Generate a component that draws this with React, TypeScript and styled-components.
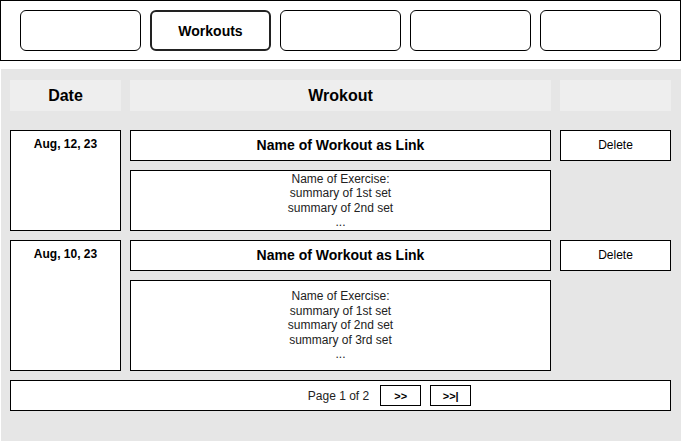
import React from "react";
import styled, { createGlobalStyle } from "styled-components";

const GlobalStyle = createGlobalStyle`
  html, body {
    margin: 0;
    padding: 0;
    background: #ffffff;
  }
  body {
    font-family: "Liberation Sans", Arial, Helvetica, sans-serif;
    color: #000;
  }
  * { box-sizing: border-box; }
`;

const Page = styled.div`
  width: 681px;
  height: 441px;
  display: flex;
  flex-direction: column;
`;

const NavBar = styled.nav`
  width: 681px;
  height: 61px;
  border: 1px solid #000;
  display: flex;
  align-items: flex-start;
  gap: 9px;
  padding: 9px 0 0 19px;
`;

const NavButton = styled.button<{ $active?: boolean }>`
  width: 121px;
  height: 41px;
  border: ${(p) => (p.$active ? "2px solid #222" : "1px solid #000")};
  border-radius: 6px;
  background: #fff;
  font-family: inherit;
  font-size: 14px;
  font-weight: 700;
  color: #000;
  padding: 0;
  display: flex;
  align-items: center;
  justify-content: center;
`;

const Main = styled.main`
  margin: 8px 0 0 1px;
  width: 680px;
  flex: 1;
  background: #e6e6e6;
  padding: 11px 10px 0 9px;
  display: flex;
  flex-direction: column;
`;

const Columns = styled.div`
  display: grid;
  grid-template-columns: 111px 421px 111px;
  column-gap: 9px;
`;

const HeaderRow = styled(Columns)`
  height: 31px;
  margin-bottom: 19px;
`;

const HeaderCell = styled.div`
  background: #eeeeee;
  display: flex;
  align-items: center;
  justify-content: center;
  font-size: 16px;
  font-weight: 700;
`;

const List = styled.div`
  display: flex;
  flex-direction: column;
  gap: 9px;
`;

const Entry = styled(Columns)<{ $summaryHeight: number }>`
  grid-template-rows: 31px ${(p) => p.$summaryHeight}px;
  row-gap: 9px;
`;

const Box = styled.div`
  background: #fff;
  border: 1px solid #000;
`;

const DateCell = styled(Box)`
  grid-row: 1 / span 2;
  text-align: center;
  font-size: 12px;
  font-weight: 700;
  line-height: 15px;
  padding-top: 6px;
`;

const NameCell = styled(Box)`
  display: flex;
  align-items: center;
  justify-content: center;
  font-size: 14px;
  font-weight: 700;
  padding-bottom: 1px;
`;

const DeleteCell = styled(Box)`
  display: flex;
  align-items: center;
  justify-content: center;
  font-size: 12px;
  padding-bottom: 1px;
`;

const SummaryCell = styled(Box)`
  grid-column: 2;
  display: flex;
  flex-direction: column;
  align-items: center;
  justify-content: center;
  font-size: 12px;
  line-height: 14.4px;
  color: #222;
`;

const Pager = styled(Box)`
  margin-top: 9px;
  height: 31px;
  padding-right: 4px;
  display: grid;
  grid-template-columns: 1fr auto 1fr;
  align-items: center;
  font-size: 12px;
  color: #222;
`;

const PagerLabel = styled.span`
  grid-column: 2;
`;

const PagerButtons = styled.div`
  display: flex;
  gap: 9px;
  padding-left: 11px;
`;

const PagerButton = styled.button`
  width: 41px;
  height: 21px;
  border: 1px solid #000;
  background: #fff;
  font-family: inherit;
  font-size: 11px;
  font-weight: 700;
  color: #000;
  padding: 0;
  display: flex;
  align-items: center;
  justify-content: center;
`;

type Workout = {
  date: string;
  lines: string[];
  summaryHeight: number;
};

const workouts: Workout[] = [
  {
    date: "Aug, 12, 23",
    lines: ["Name of Exercise:", "summary of 1st set", "summary of 2nd set", "..."],
    summaryHeight: 61,
  },
  {
    date: "Aug, 10, 23",
    lines: [
      "Name of Exercise:",
      "summary of 1st set",
      "summary of 2nd set",
      "summary of 3rd set",
      "...",
    ],
    summaryHeight: 91,
  },
];

const navItems = ["", "Workouts", "", "", ""];

export default function App() {
  return (
    <>
      <GlobalStyle />
      <Page>
        <NavBar>
          {navItems.map((label, i) => (
            <NavButton key={i} $active={label === "Workouts"}>
              {label}
            </NavButton>
          ))}
        </NavBar>
        <Main>
          <HeaderRow>
            <HeaderCell>Date</HeaderCell>
            <HeaderCell>Wrokout</HeaderCell>
            <HeaderCell />
          </HeaderRow>
          <List>
            {workouts.map((w) => (
              <Entry key={w.date} $summaryHeight={w.summaryHeight}>
                <DateCell>{w.date}</DateCell>
                <NameCell>Name of Workout as Link</NameCell>
                <DeleteCell>Delete</DeleteCell>
                <SummaryCell>
                  {w.lines.map((l, i) => (
                    <div key={i}>{l}</div>
                  ))}
                </SummaryCell>
              </Entry>
            ))}
          </List>
          <Pager>
            <PagerLabel>Page 1 of 2</PagerLabel>
            <PagerButtons>
              <PagerButton>&gt;&gt;</PagerButton>
              <PagerButton>&gt;&gt;|</PagerButton>
            </PagerButtons>
          </Pager>
        </Main>
      </Page>
    </>
  );
}
